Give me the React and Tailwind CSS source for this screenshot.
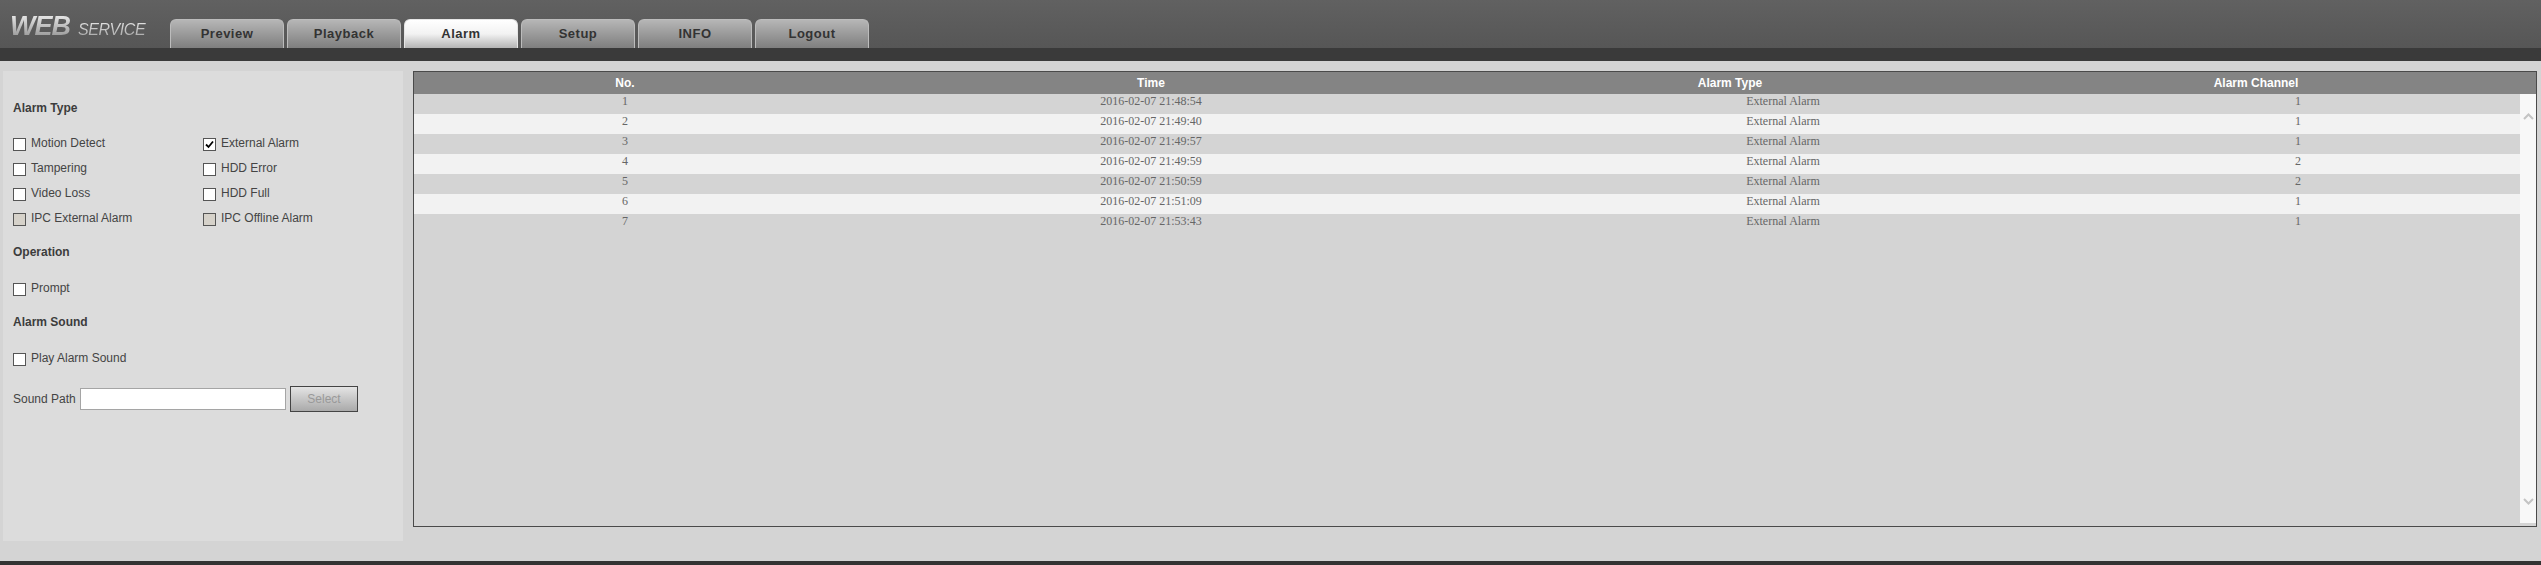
const sans = "font-['Liberation_Sans',Arial,sans-serif]";
const tabs = ["Preview", "Playback", "Alarm", "Setup", "INFO", "Logout"];
const rows = [
  ["1", "2016-02-07 21:48:54", "1"],
  ["2", "2016-02-07 21:49:40", "1"],
  ["3", "2016-02-07 21:49:57", "1"],
  ["4", "2016-02-07 21:49:59", "2"],
  ["5", "2016-02-07 21:50:59", "2"],
  ["6", "2016-02-07 21:51:09", "1"],
  ["7", "2016-02-07 21:53:43", "1"],
];

function Check({ label, checked, disabled }) {
  return (
    <label className="flex h-[25px] items-start">
      <span className={`flex h-[13px] w-[13px] shrink-0 items-center justify-center border border-[#555] ${disabled ? "bg-[#d6d2ca]" : "bg-white"}`}>
        {checked && (
          <svg width="9" height="9" viewBox="0 0 9 9">
            <path d="M1 4.5 L3.5 7 L8 1.5" fill="none" stroke="#000" strokeWidth="1.8" />
          </svg>
        )}
      </span>
      <span className="ml-[5px] -mt-[3px] text-[12px] leading-[16px] text-[#444]">{label}</span>
    </label>
  );
}

function Heading({ children, className }) {
  return <div className={`text-[12px] font-bold leading-[16px] text-[#3c3c3c] ${className}`}>{children}</div>;
}

export default function App() {
  return (
    <div className={`flex h-[565px] w-[2541px] flex-col overflow-hidden bg-[#d4d4d4] ${sans}`}>
      <header className="flex h-[48px] shrink-0 items-end bg-gradient-to-b from-[#616161] to-[#565656]">
        <div className="flex h-[48px] w-[170px] shrink-0 items-start pl-[10px] pt-[12px] italic">
          <span className="bg-gradient-to-b from-[#f4f4f4] to-[#8e8e8e] bg-clip-text pr-[2px] text-[27px] font-bold leading-[28px] tracking-[-1px] text-transparent">WEB</span>
          <span className="ml-[6px] mt-[9px] bg-gradient-to-b from-[#e8e8e8] to-[#a0a0a0] bg-clip-text pr-[2px] text-[16px] leading-[18px] tracking-[-0.4px] text-transparent">SERVICE</span>
        </div>
        <nav className="flex gap-[3px]">
          {tabs.map((t) => (
            <div
              key={t}
              className={`flex h-[29px] w-[114px] items-center justify-center rounded-t-[6px] border border-b-0 text-[13px] font-bold tracking-[0.5px] ${
                t === "Alarm"
                  ? "border-[#e6e6e6] bg-gradient-to-b from-[#ffffff] via-[#f2f2f2] to-[#b4b4b4] text-[#333]"
                  : "border-[#bcbcbc] bg-gradient-to-b from-[#b6b6b6] to-[#7f7f7f] text-[#333]"
              }`}
            >
              {t}
            </div>
          ))}
        </nav>
      </header>
      <div className="h-[13px] shrink-0 bg-[#3a3a3a]" />
      <main className="flex h-[500px] shrink-0 items-start pl-[3px] pt-[10px]">
        <aside className="h-[470px] w-[400px] shrink-0 bg-[#dcdcdc] pl-[10px] pt-[29px]">
          <Heading className="mb-[22px]">Alarm Type</Heading>
          <div className="grid w-[300px] grid-cols-[190px_110px]">
            <Check label="Motion Detect" />
            <Check label="External Alarm" checked />
            <Check label="Tampering" />
            <Check label="HDD Error" />
            <Check label="Video Loss" />
            <Check label="HDD Full" />
            <Check label="IPC External Alarm" disabled />
            <Check label="IPC Offline Alarm" disabled />
          </div>
          <Heading className="mb-[23px] mt-[6px]">Operation</Heading>
          <Check label="Prompt" />
          <Heading className="mb-[23px] mt-[6px]">Alarm Sound</Heading>
          <Check label="Play Alarm Sound" />
          <div className="mt-[8px] flex items-center text-[12px] text-[#444]">
            <span className="w-[67px]">Sound Path</span>
            <div className="h-[22px] w-[206px] border border-[#a5a5a5] bg-white" />
            <div className="ml-[4px] flex h-[26px] w-[68px] items-center justify-center border border-[#444] bg-gradient-to-b from-[#e4e4e4] to-[#aaaaaa] text-[#999]">Select</div>
          </div>
        </aside>
        <section className="ml-[10px] flex h-[456px] w-[2124px] shrink-0 flex-col border border-[#4a4a4a]">
          <div className="grid h-[22px] shrink-0 grid-cols-[422px_630px_528px_1fr] items-center bg-[#848484] text-center text-[12px] font-bold text-white">
            <span>No.</span>
            <span>Time</span>
            <span>Alarm Type</span>
            <span className="pr-[18px]">Alarm Channel</span>
          </div>
          <div className="flex min-h-0 flex-1">
            <div className="flex-1 bg-[#d4d4d4] font-['Liberation_Serif',serif] text-[12px] text-[#666]">
              {rows.map((r, i) => (
                <div key={r[0]} className={`grid h-[20px] grid-cols-[422px_630px_634px_396px] text-center leading-[15px] ${i % 2 ? "bg-[#f2f2f2]" : "bg-[#d4d4d4]"}`}>
                  <span>{r[0]}</span>
                  <span>{r[1]}</span>
                  <span>External Alarm</span>
                  <span>{r[2]}</span>
                </div>
              ))}
            </div>
            <div className="mb-[3px] flex w-[16px] shrink-0 flex-col justify-between bg-[#f8f8f8] pb-[18px] pt-[19px]">
              <svg className="ml-[3px]" width="11" height="7" viewBox="0 0 11 7">
                <path d="M1 6 L5.5 1.5 L10 6" fill="none" stroke="#c4c4c4" strokeWidth="2" />
              </svg>
              <svg className="ml-[3px]" width="11" height="7" viewBox="0 0 11 7">
                <path d="M1 1 L5.5 5.5 L10 1" fill="none" stroke="#c4c4c4" strokeWidth="2" />
              </svg>
            </div>
          </div>
        </section>
      </main>
      <div className="h-[4px] shrink-0 bg-[#333]" />
    </div>
  );
}
